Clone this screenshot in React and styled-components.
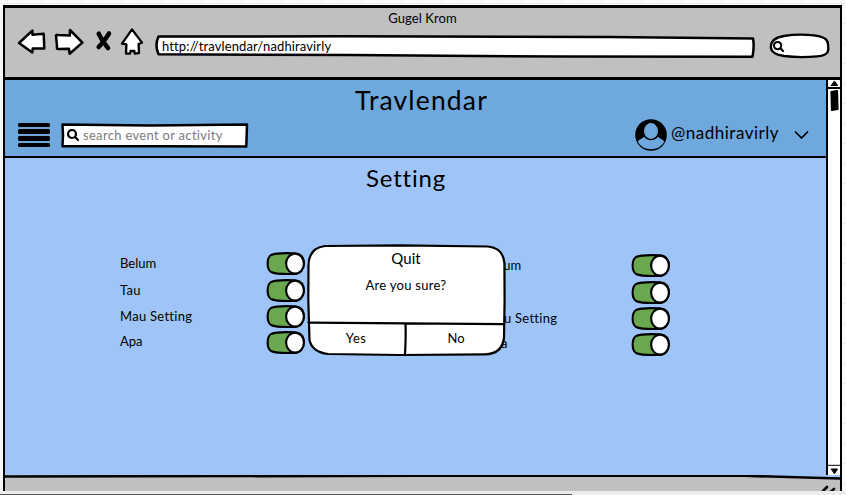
import React from 'react';
import styled, { createGlobalStyle } from 'styled-components';

const GlobalStyle = createGlobalStyle`
  * { box-sizing: border-box; }
  body { margin: 0; overflow: hidden; }
`;

const Canvas = styled.div`
  display: flex;
  flex-direction: column;
  width: 846px;
  height: 495px;
  padding: 5px 4px 0 3px;
  background-color: #fafafa;
  background-image:
    linear-gradient(90deg, #f0f0f0 1px, transparent 1px),
    linear-gradient(#f0f0f0 1px, transparent 1px);
  background-size: 20px 20px;
  background-position: 1px 3px;
  font-family: Lato, 'Liberation Sans', sans-serif;
  font-variant-ligatures: none;
  color: #000;
`;

const Window = styled.div`
  display: flex;
  flex-direction: column;
  width: 839px;
  height: 486px;
  border: solid #000;
  border-width: 3px 2px 0 2px;
  overflow: hidden;
`;

const Text = styled.span`
  display: block;
  font-size: ${(p) => p.$size || 13}px;
  line-height: ${(p) => p.$line || 20}px;
  letter-spacing: ${(p) => p.$track ?? 0.3}px;
  color: ${(p) => (p.$muted ? '#7c7c7c' : '#000')};
  white-space: nowrap;
`;

const TitleBar = styled.header`
  display: flex;
  flex-direction: column;
  align-items: center;
  flex: none;
  height: 72px;
  border-bottom: 3px solid #000;
  background: #c0c0c0;
`;

const NavRow = styled.div`
  display: flex;
  align-items: flex-start;
  width: 100%;
  padding-left: 12px;
`;

const Icon = styled.svg`
  display: block;
  flex: none;
  overflow: visible;
  fill: ${(p) => p.$fill || '#fff'};
  stroke: #000;
  stroke-width: ${(p) => p.$stroke ?? 2.5};
  stroke-linejoin: round;
  stroke-linecap: round;
`;

const Field = styled.div`
  position: relative;
  display: flex;
  align-items: center;
  flex: none;
  width: ${(p) => p.$width}px;
  height: ${(p) => p.$height}px;
  margin: ${(p) => p.$margin || 0};
  padding-left: ${(p) => p.$inset || 0}px;
  gap: 4px;
`;

const Outline = styled(Icon)`
  position: absolute;
  inset: 0;
`;

const Above = styled.div`
  position: relative;
`;

const Main = styled.div`
  display: flex;
  flex: none;
  height: 395px;
`;

const Page = styled.main`
  display: flex;
  flex-direction: column;
  width: 822px;
`;

const AppHeader = styled.header`
  display: flex;
  flex-direction: column;
  flex: none;
  height: 78px;
  border-bottom: 2.5px solid #000;
  background: #6fa8dc;
`;

const Heading = styled.h1`
  margin: 0;
  font-weight: 400;
  padding-left: ${(p) => p.$left}px;
`;

const HeaderRow = styled.div`
  display: flex;
  align-items: center;
  height: 30px;
  padding-left: 13px;
`;

const MenuBars = styled.div`
  display: flex;
  flex-direction: column;
  gap: 2.67px;
  width: 32px;
  margin-right: 11px;
`;

const Bar = styled.span`
  height: 4.2px;
  border-radius: 1.5px;
  background: #000;
`;

const User = styled.div`
  display: flex;
  align-items: center;
  margin-left: auto;
  padding-right: 18px;
`;

const Handle = styled.div`
  padding: 0 0 4px 4px;
`;

const Content = styled.section`
  position: relative;
  flex: 1;
  background: #9fc5f8;
`;

const Columns = styled.div`
  display: flex;
  gap: 180px;
  padding: 52px 0 0 115px;
`;

const SettingList = styled.div`
  display: grid;
  grid-template-rows: 27px 27px 25px 26px;
  align-items: center;
  width: 185px;
  margin-top: ${(p) => p.$drop || 0}px;
`;

const SettingRow = styled.div`
  display: flex;
  align-items: center;
  justify-content: space-between;
`;

const SettingLabel = styled.label`
  padding-bottom: 2px;
`;

const Dialog = styled.div`
  position: absolute;
  left: 302px;
  top: 86px;
  width: 200px;
  height: 113px;
`;

const DialogBody = styled.div`
  position: relative;
  display: flex;
  flex-direction: column;
  align-items: center;
  height: 80px;
  padding: 4px 2px 0 0;
`;

const DialogActions = styled.div`
  position: relative;
  display: grid;
  grid-template-columns: 98px 102px;
`;

const Action = styled.button`
  display: flex;
  justify-content: center;
  border: 0;
  padding: 4px 0 0;
  background: none;
  font: inherit;
`;

const Scrollbar = styled.aside`
  display: flex;
  flex-direction: column;
  align-items: center;
  justify-content: space-between;
  flex: 1;
  border-left: 2px solid #000;
  background: #fff;
`;

const Footer = styled.footer`
  display: flex;
  justify-content: flex-end;
  flex: 1;
  background: #c0c0c0;
`;

const Strip = styled.div`
  display: flex;
  align-items: flex-end;
  flex: none;
  height: 4px;
  margin: 0 -4px 0 -3px;
  background: #ececec;
`;

const StripLine = styled.span`
  width: 572px;
  height: 1px;
  background: #555;
`;

function Toggle() {
  return (
    <Icon width="39" height="23" viewBox="0 0 39 23" $fill="#6aa84f" $stroke={2.1}>
      <path d="M5 3C10 1 22 1 29 1.4C35 2 38 6 37.8 12C37.6 18 34 22 28 22C20 22.2 9 22 5 20C0.5 17 0.5 6 5 3Z" />
      <ellipse cx="29" cy="11.6" rx="8.9" ry="9.9" fill="#fff" />
    </Icon>
  );
}

function Magnifier({ size = 12 }) {
  return (
    <Icon width={size} height={size} viewBox="0 0 12 12" $fill="none" $stroke={2.2}>
      <circle cx="5" cy="5" r="4" />
      <path d="M8 8L11 11" />
    </Icon>
  );
}

const LABELS = [['Belum', 0], ['Tau', 0.3], ['Mau Setting', 0.28], ['Apa', 0]];

function Settings({ drop }) {
  return (
    <SettingList $drop={drop}>
      {LABELS.map(([label, track]) => (
        <SettingRow key={label}>
          <SettingLabel><Text $track={track}>{label}</Text></SettingLabel>
          <Toggle />
        </SettingRow>
      ))}
    </SettingList>
  );
}

export default function App() {
  return (
    <Canvas>
      <GlobalStyle />
      <Window>
        <TitleBar>
          <Text $line={21} $track={0.1}>Gugel Krom</Text>
          <NavRow>
            <Icon width="38" height="25" viewBox="17 29 38 25">
              <path d="M19 43L32.3 30.6L32.5 34.8L43.7 33.8L44.3 48.5L32.8 48.5L32.3 52.4Z" />
            </Icon>
            <Icon width="40" height="25" viewBox="55 29 40 25">
              <path d="M56 35.6Q56.5 34.6 58 35L69.8 35.6L70 30L82.4 42.6L69.6 53.8L69 48.8L58 49Q56.5 49 57 46Z" />
            </Icon>
            <Icon width="26" height="25" viewBox="95 29 26 25" $stroke={4.5}>
              <path d="M98.7 33.7Q102 41 108 48M109 33.4L104 41L98.7 47" fill="none" />
            </Icon>
            <Icon width="35" height="25" viewBox="121 29 35 25" $stroke={2.3}>
              <path d="M132 29.4L142 42.6L138.6 44L139 53L134.7 53.6L134.3 50.8L130.5 51L130 53.6L126 53.6L126.4 44.3L122 43.7Z" />
            </Icon>
            <Field $width={600} $height={23} $margin="6px 0 0" $inset={6}>
              <Outline width="600" height="23" viewBox="156 35 600 23">
                <path d="M158.5 36.6L340 36.3L610 36.9L753 38.4Q754.5 46 752.5 56.8L560 56.5L350 55L158.5 54.3Q154.5 45 158.5 36.6Z" />
              </Outline>
              <Above><Text $line={21} $track={0.13}>http://travlendar/nadhiravirly</Text></Above>
            </Field>
            <Field $width={60} $height={24} $margin="5px 0 0 14px" $inset={3}>
              <Outline width="60" height="24" viewBox="770 34 60 24" $stroke={2.3}>
                <path d="M784 36Q798 33.6 814 35.4Q828 37 828 44L828.4 49Q828 56 817 56.3Q800 58 784 56Q771 54 770.8 47Q771 38 784 36Z" />
              </Outline>
              <Above><Magnifier size={11} /></Above>
            </Field>
          </NavRow>
        </TitleBar>
        <Main>
          <Page>
            <AppHeader>
              <Heading $left={350}>
                <Text $size={26.5} $line={40} $track={1.15}>Travlendar</Text>
              </Heading>
              <HeaderRow>
                <MenuBars>
                  <Bar /><Bar /><Bar /><Bar />
                </MenuBars>
                <Field $width={187} $height={25} $inset={6}>
                  <Outline width="187" height="25" viewBox="61 123 187 25">
                    <path d="M62.5 124.6L150 125.6L247 124.5L246.3 146.5L160 146.2L62.5 146.2L63 135Z" />
                  </Outline>
                  <Above><Magnifier /></Above>
                  <Above><Text $muted $track={0.31} $line={22}>search event or activity</Text></Above>
                </Field>
                <User>
                  <Icon width="32" height="32" viewBox="0 0 32 32" $fill="#000" $stroke={0}>
                    <circle cx="16" cy="16" r="15.8" />
                    <ellipse cx="16" cy="12" rx="7" ry="7.9" fill="#6fa8dc" />
                    <path d="M2.8 22.5C3.8 20.8 6.5 20.2 9.3 17.8C11.5 22.3 20.5 22.3 22.7 17.8C25.5 20.2 28.2 20.8 29.2 22.5C26.5 28 21.5 30.2 16 30.2S5.5 28 2.8 22.5Z" fill="#6fa8dc" />
                  </Icon>
                  <Handle>
                    <Text $size={17} $line={26} $track={0.5}>@nadhiravirly</Text>
                  </Handle>
                  <Icon width="29" height="8" viewBox="-16 0 29 8" $fill="none" $stroke={1.7}>
                    <path d="M0.5 1L6.5 7L12.5 1" />
                  </Icon>
                </User>
              </HeaderRow>
            </AppHeader>
            <Content>
              <Heading as="h2" $left={361}>
                <Text $size={24} $line={40} $track={0.8}>Setting</Text>
              </Heading>
              <Columns>
                <Settings />
                <Settings drop={2} />
              </Columns>
              <Dialog>
                <Outline width="200" height="113" viewBox="307 244 200 113" $stroke={2.2}>
                  <path d="M325 246L400 245.3L488 246.5Q503 248 504.4 263L504.6 300L504 338Q502 354 485 354.3L400 355L328 354Q312 352 309.5 340L308.3 300L308.5 265Q309 248 325 246Z" />
                  <path d="M308.5 322.6L504 324.2M405.5 324Q406 337 405 354.5" />
                </Outline>
                <DialogBody>
                  <Text $size={15} $track={0.1}>Quit</Text>
                  <Text $line={34} $track={0.28}>Are you sure?</Text>
                </DialogBody>
                <DialogActions>
                  <Action><Text $track={0.4}>Yes</Text></Action>
                  <Action><Text $track={0}>No</Text></Action>
                </DialogActions>
              </Dialog>
            </Content>
          </Page>
          <Scrollbar>
            <Icon width="12" height="32" viewBox="828 80 12 32" $fill="#000" $stroke={1}>
              <path d="M834.7 81.3L837.6 85.5H831.5Z" />
              <path d="M828 88H841" strokeWidth="2" />
              <path d="M831.5 92L837 91L837.5 109L832 110Z" strokeWidth="2.2" />
            </Icon>
            <Icon width="12" height="12" viewBox="828 463 12 12" $fill="#000" $stroke={1}>
              <path d="M828 465.3H841" />
              <path d="M831.5 469H837.5L834.6 473.5Z" />
            </Icon>
          </Scrollbar>
        </Main>
        <Footer>
          <Icon width="836" height="16" viewBox="5 475 836 16" $fill="none" $stroke={2.6}>
            <path d="M750 475L841 475L841 478Z" fill="#9fc5f8" stroke="none" />
            <path d="M4 476.5L420 475.8L745 475.8L841 478.5" />
            <path d="M824 491L828 487M832 491.5L835 489" />
          </Icon>
        </Footer>
      </Window>
      <Strip><StripLine /></Strip>
    </Canvas>
  );
}
